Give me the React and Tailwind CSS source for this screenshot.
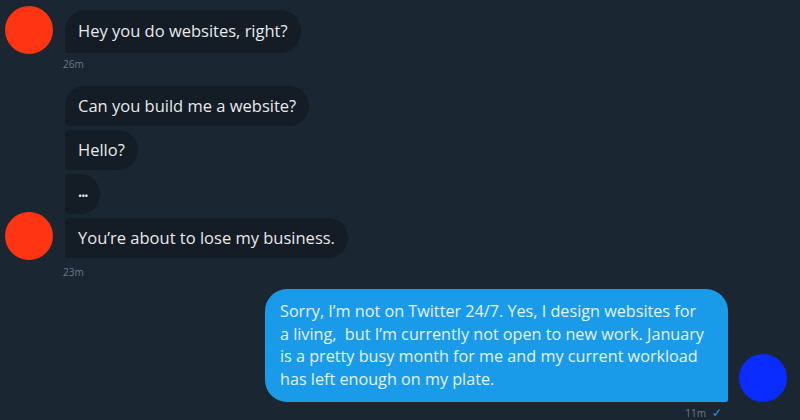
import React from "react";

const font = { fontFamily: '"Open Sans", "Noto Sans", sans-serif' };

const Avatar = ({ color }) => (
    <div className={`w-[48px] h-[48px] rounded-full shrink-0 ${color}`} />
);

// incoming bubble, corner shape depends on place in group
const InBubble = ({ children, shape }) => (
    <div
        className={`self-start h-[40px] flex items-center px-[13px] bg-[#141c25] text-[#e7e9ea] text-[16.5px] ${shape}`}
    >
        {children}
    </div>
);

const Stamp = ({ children }) => (
    <div className="text-[10px] text-[#6b7a89] pl-[63px] leading-none">{children}</div>
);

const App = () => {
    return (
        <div style={font} className="w-[800px] h-[420px] overflow-hidden bg-[#1b2633] relative">
            {/* first group */}
            <div className="flex items-end gap-[12px] pl-[5px] pt-[6px]">
                <Avatar color="bg-[#ff3412]" />
                <div className="flex flex-col mb-[1px]">
                    <InBubble shape="h-[43px] rounded-[21px] rounded-bl-[4px]">
                        Hey you do websites, right?
                    </InBubble>
                </div>
            </div>
            <div className="mt-[5px]">
                <Stamp>26m</Stamp>
            </div>

            {/* second group */}
            <div className="flex items-end gap-[12px] pl-[5px] mt-[17px]">
                <Avatar color="bg-[#ff3412]" />
                <div className="flex flex-col gap-[4px] mb-[2px]">
                    <InBubble shape="rounded-[20px] rounded-bl-[4px]">Can you build me a website?</InBubble>
                    <InBubble shape="rounded-[20px] rounded-l-[4px]">Hello?</InBubble>
                    <InBubble shape="rounded-[20px] rounded-l-[4px]">
                        <span className="text-[11px] tracking-[-1px] pt-[4px]">•••</span>
                    </InBubble>
                    <InBubble shape="rounded-[20px] rounded-tl-[4px] rounded-bl-[2px]">
                        You’re about to lose my business.
                    </InBubble>
                </div>
            </div>
            <div className="mt-[7px]">
                <Stamp>23m</Stamp>
            </div>

            {/* outgoing */}
            <div className="flex items-end justify-end gap-[11px] pr-[13px] mt-[12px]">
                <div className="flex flex-col items-end">
                    <div className="w-[463px] h-[113px] bg-[#1a9bea] rounded-[22px] rounded-br-[2px] pl-[15px] pt-[11px] text-[#e4f2fb] text-[16.2px] leading-[22.5px] whitespace-nowrap">
                        Sorry, I’m not on Twitter 24/7. Yes, I design websites for
                        <br />
                        a living,&nbsp; but I’m currently not open to new work. January
                        <br />
                        is a pretty busy month for me and my current workload
                        <br />
                        has left enough on my plate.
                    </div>
                </div>
                <Avatar color="bg-[#0b2cff]" />
            </div>
            <div className="flex justify-end pr-[78px] mt-[5px] text-[10px] text-[#6b7a89] leading-none items-center gap-[6px]">
                <span>11m</span>
                <span className="text-[#1a9bea] text-[12px]">✓</span>
            </div>
        </div>
    );
};

export default App;
